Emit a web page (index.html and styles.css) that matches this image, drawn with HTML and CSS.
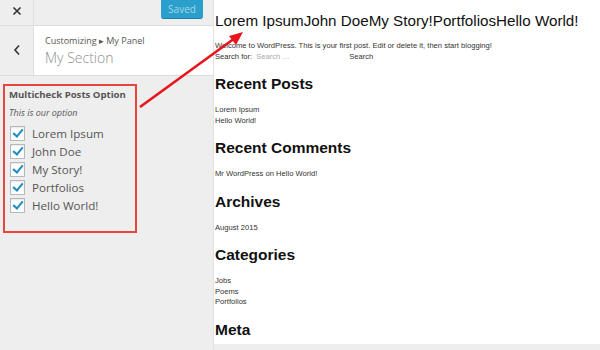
FILE: index.html
```html
<!DOCTYPE html>
<html lang="en">
<head>
    <meta charset="UTF-8">
    <title>Customizing My Section</title>
    <link rel="stylesheet" href="styles.css">
</head>
<body>
    <div id="customizer">
        <div id="sidebar">
            <div class="topbar">
                <button class="close-button" aria-label="Close">
                    <svg width="10" height="10" viewBox="0 0 10 10"><path d="M1.5 1.5L8.5 8.5M8.5 1.5L1.5 8.5" stroke="#333" stroke-width="1.6"/></svg>
                </button>
                <button class="saved-button">Saved</button>
            </div>

            <div class="section-head">
                <button class="back-button" aria-label="Back">
                    <svg width="8" height="12" viewBox="0 0 8 12"><path d="M6 1.5L2 6L6 10.5" stroke="#333" stroke-width="1.6" fill="none"/></svg>
                </button>
                <div class="section-title">
                    <span class="breadcrumb">Customizing &#9656; My Panel</span>
                    <h3>My Section</h3>
                </div>
            </div>

            <div class="control">
                <span class="control-title">Multicheck Posts Option</span>
                <span class="control-description">This is our option</span>
                <ul class="checklist">
                    <li><span class="checkbox"></span>Lorem Ipsum</li>
                    <li><span class="checkbox"></span>John Doe</li>
                    <li><span class="checkbox"></span>My Story!</li>
                    <li><span class="checkbox"></span>Portfolios</li>
                    <li><span class="checkbox"></span>Hello World!</li>
                </ul>
            </div>
        </div>

        <div id="preview">
            <h1 class="site-title">Lorem IpsumJohn DoeMy Story!PortfoliosHello World!</h1>
            <p class="line first-line">Welcome to WordPress. This is your first post. Edit or delete it, then start blogging!</p>
            <div class="line search-row">
                <span>Search for:</span>
                <span class="placeholder">Search &hellip;</span>
                <span class="search-submit">Search</span>
            </div>

            <h2>Recent Posts</h2>
            <p class="line">Lorem Ipsum</p>
            <p class="line">Hello World!</p>

            <h2>Recent Comments</h2>
            <p class="line">Mr WordPress on Hello World!</p>

            <h2>Archives</h2>
            <p class="line">August 2015</p>

            <h2>Categories</h2>
            <p class="line">Jobs</p>
            <p class="line">Poems</p>
            <p class="line">Portfolios</p>

            <h2>Meta</h2>
        </div>
    </div>

    <svg class="arrow" width="600" height="350" viewBox="0 0 600 350">
        <line x1="140" y1="107" x2="235" y2="38" stroke="#e8141b" stroke-width="2.6"/>
        <polygon points="243,32 229,36 236,45" fill="#e8141b"/>
    </svg>
</body>
</html>
```

FILE: styles.css
```css
body {
    margin: 0;
    padding: 0;
    background-color: #eee;
    overflow: hidden;
}

#customizer {
    display: flex;
    width: 600px;
    height: 350px;
}

#sidebar {
    width: 213px;
    flex-shrink: 0;
    background-color: #eee;
    font-family: 'Open Sans', sans-serif;
    color: #555;
    border-right: 1px solid #e2e2e2;
}

button {
    border: none;
    background: none;
    padding: 0;
    cursor: pointer;
}

.topbar {
    display: flex;
    justify-content: space-between;
    height: 25px;
    border-bottom: 1px solid #ddd;
}

.close-button,
.back-button {
    width: 34px;
    display: flex;
    align-items: center;
    justify-content: center;
    border-right: 1px solid #ddd;
}

.close-button {
    padding-bottom: 4px;
}

.saved-button {
    width: 42px;
    height: 19px;
    margin-right: 10px;
    background-color: #2b9fcb;
    border-bottom: 1px solid #1a7fa8;
    border-radius: 0 0 3px 3px;
    color: #a4d6ea;
    font-family: 'Open Sans', sans-serif;
    font-size: 10px;
}

.section-head {
    display: flex;
    height: 49px;
    border-bottom: 1px solid #ddd;
}

.back-button {
    padding-bottom: 2px;
}

.section-title {
    flex: 1;
    background-color: #fff;
    padding: 9px 0 0 11px;
}

.breadcrumb {
    display: block;
    font-size: 9px;
    line-height: 12px;
    color: #555;
}

.section-title h3 {
    margin: 2px 0 0;
    font-size: 14px;
    line-height: 18px;
    font-weight: 300;
    color: #8f8f8f;
}

.control {
    margin: 8px 0 0 3px;
    width: 126px;
    height: 143px;
    padding: 2px 0 0 4px;
    border: 2px solid #e9453d;
}

.control-title {
    display: block;
    font-size: 9.6px;
    font-weight: bold;
    line-height: 13px;
}

.control-description {
    display: block;
    margin-top: 6px;
    font-size: 9px;
    font-style: italic;
    line-height: 12px;
}

.checklist {
    list-style: none;
    margin: 5px 0 0;
    padding: 0;
}

.checklist li {
    display: flex;
    align-items: center;
    gap: 7px;
    height: 18px;
    font-size: 11.6px;
    color: #555;
}

.checkbox {
    position: relative;
    width: 13px;
    height: 13px;
    margin-left: 1px;
    background-color: #fff;
    border: 1px solid #b4b9be;
    box-shadow: inset 0 1px 2px rgba(0, 0, 0, 0.1);
}

.checkbox::after {
    content: "";
    position: absolute;
    left: 4px;
    top: 0px;
    width: 4px;
    height: 8px;
    border: solid #1e8cbe;
    border-width: 0 2px 2px 0;
    transform: rotate(40deg);
}

#preview {
    flex: 1;
    height: 344px;
    background-color: #fff;
    font-family: 'Liberation Sans', Arial, sans-serif;
    color: #222;
    padding-left: 1px;
    overflow: hidden;
}

.site-title {
    margin: 12px 0 0;
    font-size: 15.2px;
    line-height: 18px;
    font-weight: normal;
    color: #111;
}

.line {
    margin: 0;
    font-size: 7.6px;
    line-height: 10.5px;
    color: #333;
}

.first-line {
    margin-top: 11px;
}

.search-row {
    display: flex;
}

.placeholder {
    margin-left: 4px;
    width: 93px;
    color: #aaa;
}

h2 {
    margin: 12px 0 11px;
    font-size: 15.5px;
    line-height: 20px;
    color: #111;
}

.arrow {
    position: absolute;
    top: 0;
    left: 0;
    pointer-events: none;
}
```
